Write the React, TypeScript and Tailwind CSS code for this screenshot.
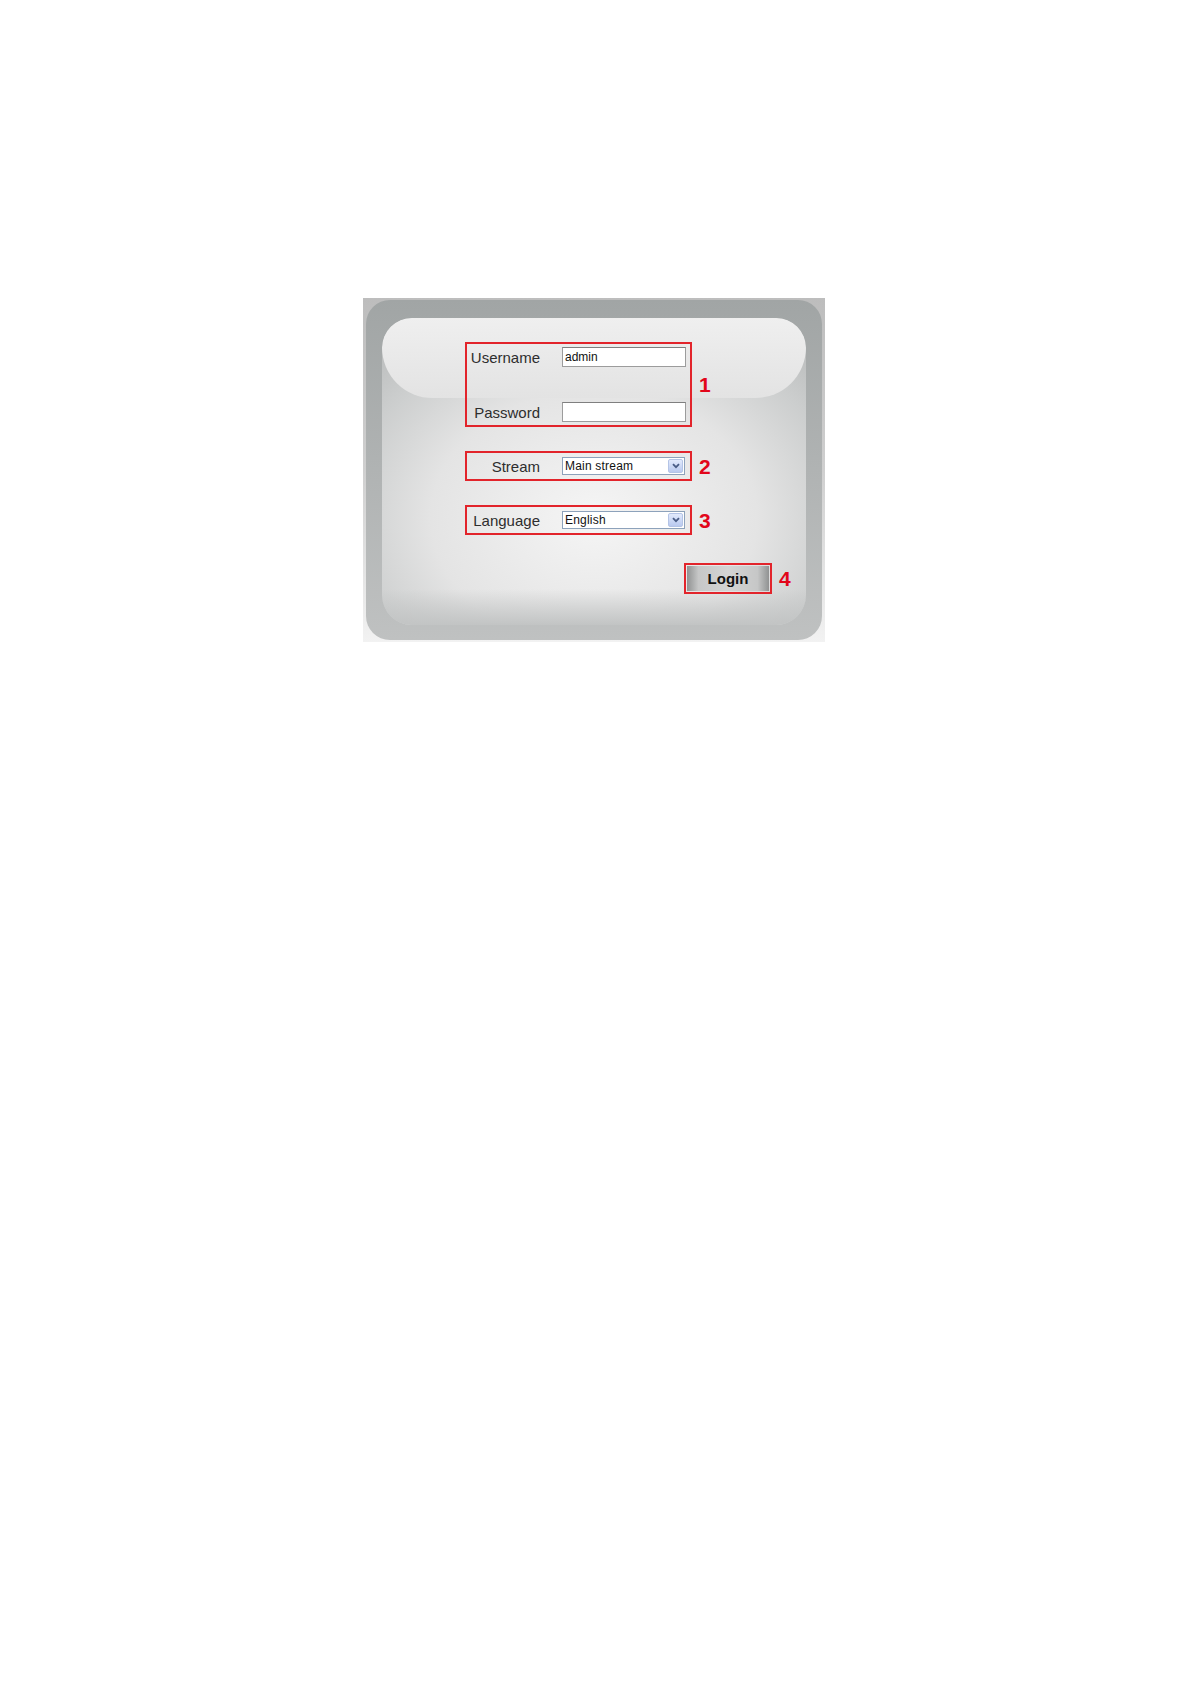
import React from "react";

const sans = "font-['Liberation_Sans',Arial,sans-serif]";

function Num({ n }: { n: string }) {
  return (
    <span className="ml-[7px] text-[21px] font-bold leading-none text-[#e2061a]">{n}</span>
  );
}

function Label({ children }: { children: React.ReactNode }) {
  return (
    <span className="w-[73px] shrink-0 text-right text-[15px] leading-none text-[#2e2e2e]">
      {children}
    </span>
  );
}

function TextInput({ value }: { value?: string }) {
  return (
    <div className="ml-[22px] flex h-[20px] w-[124px] items-center border border-[#9c9c9c] border-t-[#7f7f7f] bg-white pl-[2px] text-[12px] leading-none text-[#111]">
      {value}
    </div>
  );
}

function Select({ value }: { value: string }) {
  return (
    <div className="ml-[22px] flex h-[18px] w-[123px] items-center justify-between border border-[#8da2bb] bg-white pl-[2px] pr-[1px] text-[12px] leading-none tracking-[0.2px] text-[#111]">
      <span>{value}</span>
      <span className="flex h-[14px] w-[15px] items-center justify-center rounded-[2px] border border-[#b4c4e6] bg-linear-to-b from-[#e2eafc] to-[#b9c9ef]">
        <svg width="8" height="6" viewBox="0 0 8 6">
          <path d="M1 1.2 L4 4.2 L7 1.2" fill="none" stroke="#4a5d86" strokeWidth="1.8" />
        </svg>
      </span>
    </div>
  );
}

export default function App() {
  return (
    <div className={`min-h-[1684px] bg-white pl-[363px] pt-[298px] ${sans}`}>
      {/* screenshot frame */}
      <div className="h-[344px] w-[462px] bg-linear-to-b from-[#bdbdbd] via-[#cfcfcf] to-[#f2f2f2] px-[3px] pt-[2px] pb-[2px]">
        <div className="h-full w-full rounded-[24px] bg-linear-to-b from-[#a1a5a5] via-[#b0b3b3] to-[#bfc1c1] px-[16px] pt-[18px] pb-[15px]">
          <div className="relative h-full w-full overflow-hidden rounded-[30px] bg-[radial-gradient(ellipse_70%_75%_at_50%_65%,#f5f5f5_0%,#e4e4e4_55%,#cbcdcd_85%,#bdbfbf_100%)]">
            {/* glossy top */}
            <div className="pointer-events-none absolute left-0 right-0 top-0 h-[80px] rounded-t-[30px] rounded-b-[52px] bg-linear-to-b from-[#efefef] to-[#e3e3e3]" />
            {/* bottom shade */}
            <div className="pointer-events-none absolute bottom-0 left-0 right-0 h-[36px] bg-linear-to-b from-transparent to-[#c2c4c4]" />

            <div className="relative pl-[83px] pt-[24px]">
              {/* 1 */}
              <div className="flex items-center">
                <div className="flex w-[227px] flex-col gap-[35px] border-2 border-[#e2242b] py-[3px]">
                  <div className="flex items-center">
                    <Label>Username</Label>
                    <TextInput value="admin" />
                  </div>
                  <div className="flex items-center">
                    <Label>Password</Label>
                    <TextInput />
                  </div>
                </div>
                <Num n="1" />
              </div>

              {/* 2 */}
              <div className="mt-[24px] flex items-center">
                <div className="flex h-[30px] w-[227px] items-center border-2 border-[#e2242b]">
                  <Label>Stream</Label>
                  <Select value="Main stream" />
                </div>
                <Num n="2" />
              </div>

              {/* 3 */}
              <div className="mt-[24px] flex items-center">
                <div className="flex h-[30px] w-[227px] items-center border-2 border-[#e2242b]">
                  <Label>Language</Label>
                  <Select value="English" />
                </div>
                <Num n="3" />
              </div>

              {/* 4 */}
              <div className="ml-[219px] mt-[28px] flex items-center">
                <div className="h-[31px] w-[88px] border-2 border-[#e2242b] p-px">
                  <button
                    type="button"
                    className="flex h-full w-full items-center justify-center bg-[linear-gradient(90deg,#909292_0%,#c6c7c7_14%,#d4d4d4_50%,#c6c7c7_86%,#909292_100%)] text-[15px] font-bold leading-none text-[#111]"
                  >
                    Login
                  </button>
                </div>
                <Num n="4" />
              </div>
            </div>
          </div>
        </div>
      </div>
    </div>
  );
}
